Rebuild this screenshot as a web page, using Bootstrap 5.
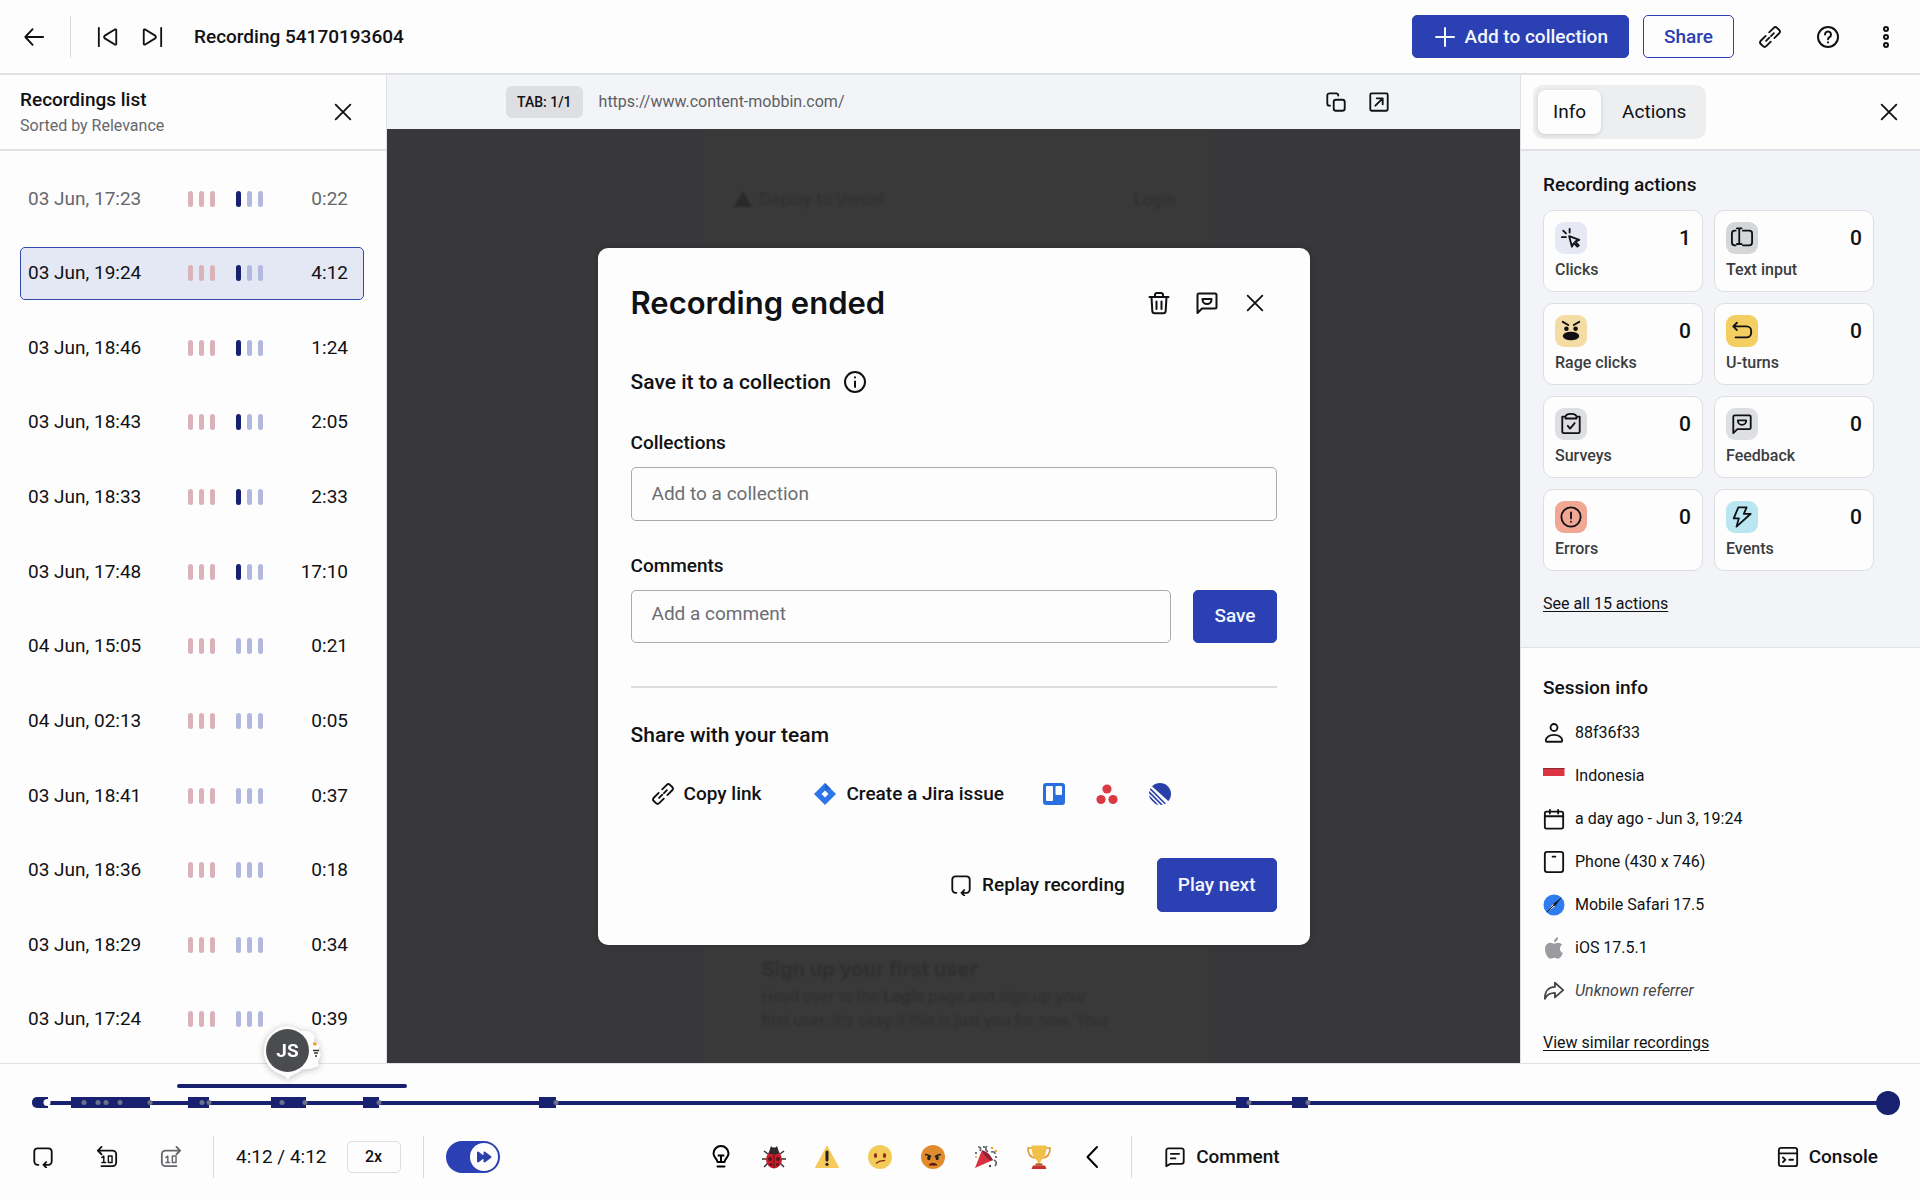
<!DOCTYPE html>
<html lang="en">
<head>
<meta charset="utf-8">
<meta name="viewport" content="width=device-width, initial-scale=1">
<title>Recording 54170193604</title>
<link href="https://cdn.jsdelivr.net/npm/bootstrap@5.3.0/dist/css/bootstrap.min.css" rel="stylesheet">
<style>
:root{--ink:#101114;--muted:#66686c;--line:#e0e1e4;--brand:#2a40b3;--navy:#17216f;--paper:#fdfdfd;--mist:#f3f4f8}
body{font-family:Roboto,"Liberation Sans",sans-serif;font-size:19px;line-height:24px;color:var(--ink);background:var(--paper);height:100vh;overflow:hidden}
h1,h2,h3{font-size:19px;line-height:24px;font-weight:500;margin:0}
svg{flex:none;display:block}
.ico{width:24px;height:24px;fill:none;stroke:currentColor;stroke-width:2;stroke-linecap:round;stroke-linejoin:round}
.ico-sm{width:22px;height:22px}
.text-sm16{font-size:16px;line-height:20px}
.muted{color:var(--muted)}
.min-0{min-width:0;min-height:0}
.icon-btn{width:44px;height:44px;padding:0;display:inline-flex;align-items:center;justify-content:center;border:0;background:none;color:var(--ink)}
.icon-btn.slim{width:32px}
.icon-btn.faded{color:var(--muted)}
.rule{width:1px;height:42px;background:#d9dadd}
.btn{font-size:19px;line-height:24px;font-weight:500;border-radius:5px;color:var(--ink)}
.btn-brand,.btn-brand:hover{background:var(--brand);border-color:var(--brand);color:#f4f6ff}
.btn-line,.btn-line:hover{border-color:var(--brand);color:var(--brand);background:var(--paper)}
.btn-top{height:43px;padding:0 20px}
.btn-tall{height:54px;padding:0 20px}
.btn-save{height:53px;padding:0 20px}
.btn-ghost{border:0;background:none;padding:0;display:inline-flex;align-items:center;gap:10px}
.topbar{height:75px;border-bottom:2px solid var(--line);padding:0 12px}
.top-tools{gap:14px}
.top-rule{margin:0 15px 0 14px}
.side-list{width:387px;border-right:1px solid var(--line)}
.side-info{width:400px;border-left:1px solid var(--line)}
.panel-head{height:76px;border-bottom:2px solid var(--line);padding:0 9px 0 12px}
.side-list .panel-head{padding:0 21px 0 20px}
.rec-list{padding:21px 22px 17px 20px}
.rec{height:53px;display:grid;grid-template-columns:160px 27px 21px 27px 1fr;align-items:center;padding:0 15px 0 7px;border:1px solid transparent;border-radius:5px;color:var(--ink);text-decoration:none}
.rec.seen{color:var(--muted)}
.rec.current{background:#e4e8f5;border-color:#3449ac}
.bars{display:flex;justify-content:space-between}
.bars i{width:5px;height:16px;border-radius:3px;background:#b3b8df}
.bars.hot i{background:#dbb2b9}
.bars i.on{background:var(--navy)}
.bars.last{grid-column:4}
.rec time{grid-column:5;text-align:right}
.rec span:first-child{white-space:nowrap}
.urlbar{height:54px;background:var(--mist);padding:0 125px 0 119px}
.copy-btn{margin-right:11px}
.tab-chip{background:#dedfe2;border-radius:6px;font-size:14px;line-height:20px;font-weight:500;padding:6px 11px}
.url-text{color:#5d5f63}
.stage{background:#38383a}
.replayed{top:0;bottom:0;left:50%;width:500px;margin-left:-248px;padding:60px 30px 0 28px;background:#393939;color:#2f2f2f;font-family:Inter,"Liberation Sans",sans-serif}
.replayed-head{filter:blur(1px)}
.replayed-foot{bottom:30px;left:56px;right:0;font-size:15px;line-height:24px;filter:blur(1px)}
.replayed-foot strong.big{font-size:20px;line-height:32px;display:block}
.ended{width:712px;border:0;border-radius:10px;padding:33px;background:var(--paper);box-shadow:0 0 6px rgba(0,0,0,.2)}
.ended h2{font-family:Inter,"Liberation Sans",sans-serif;font-size:31px;line-height:42px;font-weight:600}
.ended h3{font-size:21px;line-height:26px}
.ended-save{margin-top:44px}
.field{height:54px;border:1px solid #a9abb0;border-radius:5px;font-size:19px;line-height:24px;padding:14px 20px;background:var(--paper);resize:none;overflow:hidden;color:var(--ink)}
textarea.field{height:53px;padding-top:11px}
.field::placeholder{color:#6b6d72;opacity:1}
.lbl-top{margin:36px 0 12px}
.lbl-mid{margin:33px 0 12px}
.gap-row{gap:22px;margin-bottom:43px}
.split{border-top:2px solid #dcdddf;margin-bottom:34px}
.share-row{margin:34px 0 52px;padding-left:21px;gap:31px}
.share-row .btn:nth-child(2){margin:0 8px 0 22px}
.end-row{gap:32px}
.seg{background:#eceef0;border-radius:10px;padding:5px}
.seg button{height:44px;border:0;background:none;border-radius:7px;padding:0 15px;color:var(--ink)}
.seg button.picked{background:var(--paper);box-shadow:0 1px 4px rgba(0,0,0,.15)}
.seg .act{padding-left:21px}
.actions-zone{background:var(--mist);border-bottom:1px solid var(--line);padding:22px 46px 32px 22px}
.tiles{display:grid;grid-template-columns:1fr 1fr;gap:11px;margin-top:13px}
.tile{height:82px;background:var(--paper);border:1px solid #dcdee2;border-radius:10px;padding:11px}
.tile-ico{width:32px;height:32px;border-radius:9px;display:flex;align-items:center;justify-content:center}
.tile b{font-size:21px;line-height:32px;font-weight:500}
.tile span{color:#3b3d41;font-weight:500;line-height:20px;margin-top:6px;display:block}
.plain-link{color:var(--ink);text-decoration:underline;text-underline-offset:2px}
.see-all{margin-top:23px}
.session{padding:28px 22px 0}
.facts{margin:11px 0 18px}
.facts li{height:43px;display:flex;align-items:center;gap:10px}
.facts svg{width:22px;height:22px}
.facts .unknown{color:#44464a}
.player{height:137px;border-top:1px solid var(--line)}
.track{height:50px;margin:13px 32px 0}
.track svg{width:100%;height:50px;overflow:visible}
.who{left:261px;top:-42px}
.who svg{filter:drop-shadow(0 1px 3px rgba(0,0,0,.25))}
.controls{display:grid;grid-template-columns:36% 1fr auto;align-items:center;height:60px}
.left-set{padding-left:27px}
.skips{gap:32px;margin-right:4px}
.left-set .rule{margin:0 22px}
.clock{margin-right:20px}
.speed{width:54px;height:32px;border:1px solid #dcdde0;border-radius:5px;background:var(--paper);font-size:16px;font-weight:500;padding:0;color:var(--ink);appearance:none;text-align:center;text-align-last:center}
.skip{width:54px;height:32px}
.skip input{appearance:none;width:54px;height:32px;margin:0;border-radius:16px;background:var(--brand);display:block}
.skip svg{left:23px;top:1px;pointer-events:none}
.mid-set{padding-left:3px}
.emo{width:53px;height:44px;padding:0;border:0;background:none;display:inline-flex;align-items:center;justify-content:center}
.emo-rule{margin:0 32px 0 13px}
.console-btn{margin-right:42px}
</style>
</head>
<body class="d-flex flex-column">
<svg width="0" height="0" class="position-absolute" aria-hidden="true">
  <symbol id="x" viewBox="0 0 24 24"><path d="M4 4l16 16M20 4L4 20"/></symbol>
  <symbol id="link" viewBox="0 0 24 24"><g transform="rotate(-45 12 12)"><path d="M9 16.200H2a2.500 2.500 0 0 1-2.500-2.500v-3.400A2.500 2.500 0 0 1 2 7.800h7.500M15 7.800h7a2.500 2.500 0 0 1 2.500 2.500v3.400a2.500 2.500 0 0 1-2.500 2.500h-7.500M6 12h5M13.500 12h4.500"/></g></symbol>
  <symbol id="smile" viewBox="0 0 24 24"><path d="M2.500 22V4a1.500 1.500 0 0 1 1.500-1.500h16A1.500 1.500 0 0 1 21.500 4v12a1.500 1.500 0 0 1-1.500 1.500H7zM7.500 8h9v.5a4.500 4.500 0 0 1-9 0z"/></symbol>
  <symbol id="replay" viewBox="0 0 24 24"><path d="M7 20.500H6A3.500 3.500 0 0 1 2.500 17V6A3.500 3.500 0 0 1 6 2.500h12A3.500 3.500 0 0 1 21.500 6v11a3.500 3.500 0 0 1-3.500 3.500h-5.500M15.500 17.500l-3 3 3 3"/></symbol>
</svg>

<header class="topbar d-flex align-items-center flex-shrink-0">
  <button class="icon-btn" aria-label="Back"><svg class="ico ico-sm" viewBox="0 0 24 24"><path d="M22 12H2.500M10.500 3.500L2.500 12l8 8.500"/></svg></button>
  <div class="rule top-rule"></div>
  <button class="icon-btn" aria-label="Previous recording"><svg class="ico ico-sm" viewBox="0 0 24 24"><path d="M2 2v20M21 5v14q0 2-2 1L8.500 13.500q-1.500-1.500 0-3L19 4q2-1 2 1z"/></svg></button>
  <button class="icon-btn" aria-label="Next recording"><svg class="ico ico-sm" viewBox="0 0 24 24"><path d="M22 2v20M3 5v14q0 2 2 1l10.500-6.500q1.500-1.500 0-3L5 4q-2-1-2 1z"/></svg></button>
  <h1 class="ms-3 ps-1">Recording 54170193604</h1>
  <div class="top-tools d-flex align-items-center ms-auto">
    <button class="btn btn-brand btn-top d-flex align-items-center gap-2"><svg class="ico" viewBox="0 0 24 24"><path d="M12 3v18M3 12h18"/></svg>Add to collection</button>
    <button class="btn btn-line btn-top">Share</button>
    <button class="icon-btn" aria-label="Copy link"><svg class="ico ico-sm"><use href="#link"/></svg></button>
    <button class="icon-btn" aria-label="Help"><svg class="ico" viewBox="0 0 24 24"><circle cx="12" cy="12" r="10"/><path d="M9 9.500a3 3 0 1 1 4.500 2.600c-1 .6-1.500 1-1.500 2.200M12 17.300v.2"/></svg></button>
    <button class="icon-btn" aria-label="More"><svg class="ico" viewBox="0 0 24 24"><circle cx="12" cy="4" r="2"/><circle cx="12" cy="12" r="2"/><circle cx="12" cy="20" r="2"/></svg></button>
  </div>
</header>

<main class="d-flex flex-grow-1 min-0">
  <aside class="side-list d-flex flex-column flex-shrink-0">
    <div class="panel-head d-flex align-items-center justify-content-between flex-shrink-0">
      <div><h2>Recordings list</h2><div class="text-sm16 muted pt-1">Sorted by Relevance</div></div>
      <button class="icon-btn" aria-label="Close list"><svg class="ico ico-sm"><use href="#x"/></svg></button>
    </div>
    <nav class="rec-list d-flex flex-column justify-content-between flex-grow-1" id="recs"></nav>
  </aside>

  <section class="d-flex flex-column flex-grow-1 min-0">
    <div class="urlbar d-flex align-items-center flex-shrink-0">
      <span class="tab-chip">TAB: 1/1</span>
      <span class="url-text text-sm16 ms-3">https://www.content-mobbin.com/</span>
      <button class="icon-btn slim ms-auto copy-btn" aria-label="Copy address"><svg class="ico ico-sm" viewBox="0 0 24 24"><rect x="9.500" y="9.500" width="12" height="12" rx="2.500"/><path d="M5.500 16H5a2.500 2.500 0 0 1-2.500-2.500V5A2.500 2.500 0 0 1 5 2.500h7A2.500 2.500 0 0 1 14.500 5"/></svg></button>
      <button class="icon-btn slim" aria-label="Open page"><svg class="ico ico-sm" viewBox="0 0 24 24"><rect x="2.500" y="2.500" width="19" height="19" rx="1.500"/><path d="M8 16l7.500-7.500M9.500 8h6.500v6.500"/></svg></button>
    </div>
    <div class="stage position-relative d-flex align-items-center justify-content-center flex-grow-1">
      <div class="replayed position-absolute text-sm16">
        <div class="replayed-head d-flex align-items-center gap-2"><svg width="18" height="16" viewBox="0 0 18 16"><path d="M9 0l9 16H0z" fill="#292929"/></svg>Deploy to Vercel<span class="ms-auto">Login</span></div>
        <div class="replayed-foot position-absolute"><strong class="big">Sign up your first user</strong>Head over to the <strong>Login</strong> page and sign up your<br>first user. It's okay if this is just you for now. Your</div>
      </div>
      <div class="ended card position-relative">
        <div class="d-flex align-items-center justify-content-between">
          <h2>Recording ended</h2>
          <div class="d-flex gap-1">
            <button class="icon-btn" aria-label="Delete"><svg class="ico" viewBox="0 0 24 24"><path d="M2.500 6h19M8 6V4a2 2 0 0 1 2-2h4a2 2 0 0 1 2 2v2M4.500 6l.8 14a2.500 2.500 0 0 0 2.500 2.300h8.400a2.500 2.500 0 0 0 2.500-2.300l.8-14M9.500 10.500v7.500M14.500 10.500v7.500"/></svg></button>
            <button class="icon-btn" aria-label="Feedback"><svg class="ico"><use href="#smile"/></svg></button>
            <button class="icon-btn" aria-label="Close dialog"><svg class="ico ico-sm"><use href="#x"/></svg></button>
          </div>
        </div>
        <h3 class="ended-save d-flex align-items-center gap-2">Save it to a collection <svg class="ico ms-1" viewBox="0 0 24 24"><circle cx="12" cy="12" r="10"/><path d="M12 11.500v5.500M12 7.300v.3"/></svg></h3>
        <label class="fw-medium lbl-top" for="coll">Collections</label>
        <input class="form-control field" id="coll" placeholder="Add to a collection">
        <label class="fw-medium lbl-mid" for="comm">Comments</label>
        <div class="d-flex align-items-stretch gap-row">
          <textarea class="form-control field" id="comm" rows="1" placeholder="Add a comment"></textarea>
          <button class="btn btn-brand btn-save">Save</button>
        </div>
        <div class="split"></div>
        <h3>Share with your team</h3>
        <div class="share-row d-flex align-items-center">
          <button class="btn btn-ghost"><svg class="ico ico-sm"><use href="#link"/></svg>Copy link</button>
          <button class="btn btn-ghost"><svg width="22" height="22" viewBox="0 0 22 22"><path d="M11 0l11 11-11 11L0 11z" fill="#2d75e8"/><path d="M11 7.500l3.500 3.500-3.500 3.500L7.500 11z" fill="#fdfdfd"/><path d="M11 0l5.500 5.500-5.500 2z" fill="#1f62d6"/></svg>Create a Jira issue</button>
          <button class="btn btn-ghost" aria-label="Trello"><svg width="22" height="22" viewBox="0 0 22 22"><rect width="22" height="22" rx="3" fill="#2a6fe0"/><rect x="3" y="3" width="7" height="15" rx="1" fill="#fdfdfd"/><rect x="12.500" y="3" width="6.500" height="9" rx="1" fill="#fdfdfd"/></svg></button>
          <button class="btn btn-ghost" aria-label="Asana"><svg width="22" height="22" viewBox="0 0 22 22" fill="#d93a43"><circle cx="11" cy="6" r="4.600"/><circle cx="5" cy="16.500" r="4.600"/><circle cx="17" cy="16.500" r="4.600"/></svg></button>
          <button class="btn btn-ghost" aria-label="Linear"><svg width="22" height="22" viewBox="0 0 22 22"><clipPath id="lc"><circle cx="11" cy="11" r="11"/></clipPath><g clip-path="url(#lc)"><path d="M0-1h23v22.500L1.500 2z" fill="#2a40a8"/><path d="M0 4.500L18 22.500M-1 8l15.500 15.500M-1 12.500L10.500 24M-1 17l7 7" stroke="#2a40a8" stroke-width="1.600"/></g></svg></button>
        </div>
        <div class="d-flex justify-content-end align-items-center end-row">
          <button class="btn btn-ghost"><svg class="ico ico-sm"><use href="#replay"/></svg>Replay recording</button>
          <button class="btn btn-brand btn-tall">Play next</button>
        </div>
      </div>
    </div>
  </section>

  <aside class="side-info d-flex flex-column flex-shrink-0">
    <div class="panel-head d-flex align-items-center justify-content-between flex-shrink-0">
      <div class="seg d-flex"><button class="picked">Info</button><button class="act">Actions</button></div>
      <button class="icon-btn" aria-label="Close info"><svg class="ico ico-sm"><use href="#x"/></svg></button>
    </div>
    <div class="actions-zone">
      <h2>Recording actions</h2>
      <div class="tiles text-sm16" id="tiles"></div>
      <a class="plain-link text-sm16 d-inline-block see-all" href="#">See all 15 actions</a>
    </div>
    <div class="session">
      <h2>Session info</h2>
      <ul class="facts list-unstyled text-sm16">
        <li><svg class="ico" viewBox="0 0 24 24"><circle cx="12" cy="6" r="3.800"/><path d="M4 21.500c-.8 0-1-.6-1-1.200C3 16.500 7 14 12 14s9 2.500 9 6.300c0 .6-.2 1.200-1 1.200z"/></svg>88f36f33</li>
        <li><svg viewBox="0 0 22 22"><path d="M0 3h21.500v8H0z" fill="#da3540"/><path d="M0 3h21.500v1H0z" fill="#8b2a33"/></svg>Indonesia</li>
        <li><svg class="ico" viewBox="0 0 24 24"><rect x="2" y="4" width="20" height="18.500" rx="2"/><path d="M2 9h20M7.500 2v4M16.500 2v4"/></svg>a day ago - Jun 3, 19:24</li>
        <li><svg class="ico" viewBox="0 0 24 24"><rect x="2" y="1" width="20" height="22" rx="2.500"/><path d="M10.500 6.200h3"/></svg>Phone (430 x 746)</li>
        <li><svg viewBox="0 0 22 22"><circle cx="11" cy="11" r="10.500" fill="#2f7bf0"/><path d="M4 18l6-8 8-6-6 8.500z" fill="#161c2e"/><path d="M4 18l6-8 2 2.500z" fill="#dfe6f2"/><path d="M4 18L18 4" stroke="#111" stroke-width="1"/></svg>Mobile Safari 17.5</li>
        <li><svg viewBox="0 0 22 22"><path d="M15.200 5.800c-1.800 0-2.800 1-4 1s-2.200-1-3.900-1C4.500 5.800 2 8.200 2 12.200c0 4.300 3 9.500 5.500 9.500 1.400 0 2-.9 3.800-.9s2.300.9 3.800.9c2 0 3.900-3.200 4.700-5.600-1.800-.8-2.900-2.300-2.900-4.300 0-1.700.9-3.100 2.300-4-1-1.300-2.500-2-4-2z" fill="#9a9b9e"/><path d="M11 5.200C10.800 2.900 12.600.7 15 0c.3 2.500-1.700 5-4 5.200z" fill="#9a9b9e"/></svg>iOS 17.5.1</li>
        <li class="fst-italic unknown"><svg class="ico" viewBox="0 0 24 24"><path d="M13 3l9 8-9 8v-5c-5 0-8.500 1.500-11 6.500C2 13 5.500 7.500 13 7.500z"/></svg>Unknown referrer</li>
      </ul>
      <a class="plain-link text-sm16" href="#">View similar recordings</a>
    </div>
  </aside>
</main>

<footer class="player flex-shrink-0 position-relative">
  <div class="track">
    <svg viewBox="0 0 1856 50" preserveAspectRatio="none" role="img" aria-label="Timeline">
      <g fill="#17216f">
        <rect x="145" y="7" width="230" height="4" rx="2"/>
        <path d="M5 20h11v11H5a5 5 0 0 1-5-5v-1a5 5 0 0 1 5-5z"/>
        <rect x="17" y="24" width="1839" height="4"/>
        <circle cx="15" cy="25.500" r="3.500" fill="#fdfdfd"/>
        <rect x="39" y="20" width="79" height="11"/><rect x="156" y="20" width="21" height="11"/><rect x="239" y="20" width="35" height="11"/><rect x="331" y="20" width="16" height="11"/><rect x="507" y="20" width="17" height="11"/><rect x="1204" y="20" width="13" height="11"/><rect x="1260" y="20" width="16" height="11"/>
        <circle cx="1856" cy="26" r="12"/>
      </g>
      <g fill="#6c7089"><circle cx="52" cy="25.500" r="2.500"/><circle cx="66" cy="25.500" r="2.500"/><circle cx="74" cy="25.500" r="2.500"/><circle cx="88" cy="25.500" r="2.500"/><circle cx="118" cy="25.500" r="2.500"/><circle cx="170" cy="25.500" r="2.500"/><circle cx="177" cy="25.500" r="2.500"/><circle cx="250" cy="25.500" r="2.500"/><circle cx="273" cy="25.500" r="2.500"/><circle cx="347" cy="25.500" r="2.500"/><circle cx="524" cy="25.500" r="2.500"/><circle cx="1217" cy="25.500" r="2.500"/><circle cx="1276" cy="25.500" r="2.500"/></g>
    </svg>
  </div>
  <div class="who position-absolute">
    <svg width="66" height="66" viewBox="0 0 66 66">
      <path d="M34 9l14 0 6 5-1 5 6 4-2 5 3 5-3 6 1 5-9 3-15 1z" fill="#fdfdfd"/>
      <path d="M52 20l4 1-1 3-3-1z" fill="#eaa934"/><path d="M52 28.500h6M53 31h4M54 34h2" stroke="#333" stroke-width="1.500"/>
      <path d="M26 4a25 25 0 0 1 7 48.500q-4 1.500-6 5.500-2-3.500-6-5A25 25 0 0 1 26 4z" fill="#fdfdfd"/>
      <circle cx="26.500" cy="28.500" r="21.500" fill="#4a4c50"/>
      <text x="26.500" y="35" text-anchor="middle" font-size="19" font-weight="700" fill="#fdfdfd">JS</text>
    </svg>
  </div>
  <div class="controls">
    <div class="d-flex align-items-center left-set">
      <div class="skips d-flex">
        <button class="icon-btn slim" aria-label="Replay"><svg class="ico ico-sm"><use href="#replay"/></svg></button>
        <button class="icon-btn slim" aria-label="Back 10 seconds"><svg class="ico ico-sm" viewBox="0 0 24 24"><path d="M6 1L2 5l4 4M2 5h16a4 4 0 0 1 4 4v9a4 4 0 0 1-4 4H6"/><path d="M6.500 12.500L8.500 11v7M6.500 18h4M13.500 11h4v7h-4z" stroke-width="1.600"/></svg></button>
        <button class="icon-btn slim faded" aria-label="Forward 10 seconds"><svg class="ico ico-sm" viewBox="0 0 24 24"><path d="M18 1l4 4-4 4M22 5H6a4 4 0 0 0-4 4v9a4 4 0 0 0 4 4h12"/><path d="M6.500 12.500L8.500 11v7M6.500 18h4M13.500 11h4v7h-4z" stroke-width="1.600"/></svg></button>
      </div>
      <div class="rule"></div>
      <span class="clock">4:12 / 4:12</span>
      <select class="speed" aria-label="Speed"><option>2x</option></select>
      <div class="rule"></div>
      <label class="skip position-relative"><input type="checkbox" checked aria-label="Skip pauses"><svg class="position-absolute" width="30" height="30" viewBox="0 0 30 30"><circle cx="15" cy="15" r="14" fill="#fdfdfd"/><path d="M9 10.500l6 4.500-6 4.500zM15.500 10.500l6 4.500-6 4.500z" fill="#2a40a8" stroke="#2a40a8" stroke-width="2" stroke-linejoin="round"/></svg></label>
    </div>
    <div class="mid-set d-flex align-items-center">
      <button class="emo" aria-label="Idea"><svg class="ico" viewBox="0 0 24 24"><path d="M8.500 17c0-3-4-4.500-4-8.500a7.500 7.500 0 0 1 15 0c0 4-4 5.500-4 8.500zM8.500 21.500h7M9.500 10.500h5M12 10.500v6"/></svg></button>
      <button class="emo" aria-label="Bug"><svg width="24" height="24" viewBox="0 0 24 24"><path d="M2 6l4 3M0 14h6M2 22l4-4M22 6l-4 3M24 14h-6M22 22l-4-4" stroke="#333" stroke-width="1.500" fill="none"/><path d="M7 7l2-6 1.500 1.500h3L15 1l2 6z" fill="#2a2a2e"/><ellipse cx="12" cy="14.500" rx="8" ry="9" fill="#c3202c"/><path d="M6 8a9 9 0 0 1 12 0q-6 2.500-12 0z" fill="#2a2a2e"/><path d="M12 8v15" stroke="#5c1218"/><circle cx="8" cy="14" r="2" fill="#5c1218"/><circle cx="16" cy="14" r="2" fill="#5c1218"/><circle cx="9" cy="19.500" r="1.500" fill="#5c1218"/><circle cx="15.500" cy="19.500" r="1.500" fill="#5c1218"/></svg></button>
      <button class="emo" aria-label="Warning"><svg width="24" height="24" viewBox="0 0 24 24"><path d="M12 1l11.500 21.500H.5z" fill="#f6c95a" stroke="#f6c95a" stroke-linejoin="round"/><path d="M12 7v8" stroke="#222" stroke-width="3" stroke-linecap="round"/><circle cx="12" cy="19.300" r="1.600" fill="#222"/></svg></button>
      <button class="emo" aria-label="Confused"><svg width="24" height="24" viewBox="0 0 24 24"><circle cx="12" cy="12" r="12" fill="#f3cb59"/><ellipse cx="7.500" cy="10.500" rx="1.600" ry="2.500" fill="#8f2b14"/><ellipse cx="16.500" cy="10.500" rx="1.600" ry="2.500" fill="#8f2b14"/><path d="M8.500 18q3-2.500 8-2.500" stroke="#8f2b14" stroke-width="1.500" fill="none" stroke-linecap="round"/></svg></button>
      <button class="emo" aria-label="Angry"><svg width="24" height="24" viewBox="0 0 24 24"><circle cx="12" cy="12" r="12" fill="#e08c2c"/><path d="M4 9.500q4 0 6 2.500M20 9.500q-4 0-6 2.500" stroke="#222" stroke-width="1.400" fill="none"/><ellipse cx="7.800" cy="13" rx="1.600" ry="2.200" fill="#222"/><ellipse cx="16.200" cy="13" rx="1.600" ry="2.200" fill="#222"/><path d="M8 20q4-3.500 8 0z" fill="#5a1710" stroke="#5a1710"/></svg></button>
      <button class="emo" aria-label="Celebrate"><svg width="24" height="24" viewBox="0 0 24 24"><path d="M8 5l11 10L1 23z" fill="#d93040"/><path d="M8 5q7 2 11 10-3 2-7-3T8 5z" fill="#8f2232"/><path d="M4 2q4 0 2 4M13 1q-3 3 1 6M17 7q4-1 4 2M20 15q4 2 1 6" stroke="#5b6470" stroke-width="1.700" fill="none"/><g fill="#e8a93a"><circle cx="18" cy="3" r="1.300"/><circle cx="22" cy="6" r="1.200"/><circle cx="2" cy="12" r="1"/></g><g fill="#445"><circle cx="10" cy="2" r="1"/><circle cx="2" cy="8" r="1"/><circle cx="16" cy="21" r="1.200"/><circle cx="22" cy="12" r="1"/></g></svg></button>
      <button class="emo" aria-label="Win"><svg width="24" height="24" viewBox="0 0 24 24"><path d="M5 3H1q0 9 7 10M19 3h4q0 9-7 10" stroke="#e09a35" stroke-width="1.700" fill="none"/><path d="M4.500.5h15q0 11-5 14.500-1.300 1-1.300 4h-2.400q0-3-1.300-4-5-3.500-5-14.500z" fill="#f0c049"/><path d="M8.500 18.500h7v2h-7z" fill="#a8541f"/><path d="M6 20.500h12l1.500 3.500h-15z" fill="#c9302c"/></svg></button>
      <button class="emo" aria-label="Collapse"><svg class="ico" viewBox="0 0 24 24"><path d="M17 2L7.500 12l9.500 10"/></svg></button>
      <div class="rule emo-rule"></div>
      <button class="btn btn-ghost"><svg class="ico ico-sm" viewBox="0 0 24 24"><path d="M2.500 22V5A2.500 2.500 0 0 1 5 2.500h14A2.500 2.500 0 0 1 21.500 5v12a2.500 2.500 0 0 1-2.500 2.500H7zM7.500 8.500h9M7.500 13.500h5"/></svg>Comment</button>
    </div>
    <button class="btn btn-ghost console-btn"><svg class="ico ico-sm" viewBox="0 0 24 24"><rect x="2" y="2" width="20" height="20" rx="2.500"/><path d="M2 8h20M6.500 12.500l2.500 2.500-2.500 2.500M13.500 15h4"/></svg>Console</button>
  </div>
</footer>
<script src="https://cdn.jsdelivr.net/npm/bootstrap@5.3.0/dist/js/bootstrap.bundle.min.js"></script>
<script>
const recs=[["03 Jun, 17:23","0:22",1],["03 Jun, 19:24","4:12",1],["03 Jun, 18:46","1:24",1],["03 Jun, 18:43","2:05",1],["03 Jun, 18:33","2:33",1],["03 Jun, 17:48","17:10",1],["04 Jun, 15:05","0:21",0],["04 Jun, 02:13","0:05",0],["03 Jun, 18:41","0:37",0],["03 Jun, 18:36","0:18",0],["03 Jun, 18:29","0:34",0],["03 Jun, 17:24","0:39",0]];
document.getElementById("recs").innerHTML=recs.map(([d,t,on],i)=>`<a href="#" class="rec ${i==0?"seen":i==1?"current":""}"><span>${d}</span><span class="bars hot"><i></i><i></i><i></i></span><span class="bars last"><i class="${on?"on":""}"></i><i></i><i></i></span><time>${t}</time></a>`).join("");
const tiles=[
["Clicks",1,"#e6e8f4",'<path d="M10 10l11 4-4.500 2 4 4-1.500 1.500-4-4-2 4zM10.500 2v4M3.500 4l3 3M2 11h4.500"/>'],
["Text input",0,"#d5d6d7",'<path d="M5 4H4a3 3 0 0 0-3 3v10a3 3 0 0 0 3 3h1M13 4h7a3 3 0 0 1 3 3v10a3 3 0 0 1-3 3h-7M9 2v16M6.500 1.500h5M6.500 18.500h5"/>'],
["Rage clicks",0,"#f4dca4",'<path d="M3 2l6 3.500M21 2l-6 3.500"/><circle cx="7" cy="9.500" r="1.500" fill="currentColor"/><circle cx="17" cy="9.500" r="1.500" fill="currentColor"/><ellipse cx="12" cy="17.500" rx="8" ry="3.700" fill="currentColor"/>'],
["U-turns",0,"#f3cf62",'<path d="M6.500 3L2.500 7l4 4M2.500 7H17a5 5 0 0 1 5 5v2a5 5 0 0 1-5 5H5"/>'],
["Surveys",0,"#dedfe2",'<path d="M6 4H2.500v16.500A1.500 1.500 0 0 0 4 22h16a1.500 1.500 0 0 0 1.500-1.500V4H18M6 6q-1-5 6-5t6 5zM8.500 14l2.500 3 5-6"/>'],
["Feedback",0,"#dedfe2",'<use href="#smile"/>'],
["Errors",0,"#f2a794",'<circle cx="12" cy="12" r="10.500"/><path d="M12 7v6.500M12 17v.3"/>'],
["Events",0,"#b9e6f1",'<path d="M8 1.500h9l-3 7h7.500L6 22.500l2.500-9H3z"/>']];
document.getElementById("tiles").innerHTML=tiles.map(([n,c,bg,p])=>`<div class="tile"><div class="d-flex justify-content-between"><div class="tile-ico" style="background:${bg}"><svg class="ico ico-sm" viewBox="0 0 24 24">${p}</svg></div><b>${c}</b></div><span>${n}</span></div>`).join("");
</script>
</body>
</html>
